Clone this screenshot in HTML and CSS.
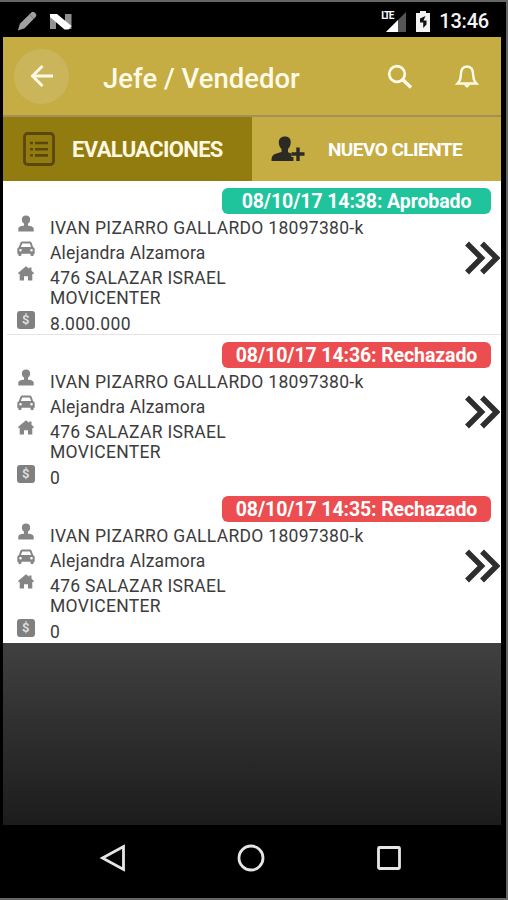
FILE: index.html
```html
<!DOCTYPE html>
<html lang="es">
<head>
    <meta charset="UTF-8">
    <meta name="viewport" content="width=device-width, initial-scale=1.0">
    <title>Jefe / Vendedor</title>
    <link rel="stylesheet" href="styles.css">
</head>
<body>
    <!-- iconos compartidos -->
    <svg class="sprite">
        <symbol id="user" viewBox="0 0 18 18">
            <path d="M9 .5c2.900 0 4.300 1.800 4.100 4.400-.1 1.700-1 2.900-2.100 3.700v2.200c3 .2 5.700.7 5.700 3.200v2.600H1.300V14c0-2.500 2.700-3 5.700-3.200V8.600C5.900 7.800 5 6.600 4.900 4.900 4.700 2.300 6.100.5 9 .5z"/>
        </symbol>
        <symbol id="car" viewBox="0 0 18 16">
            <path fill-rule="evenodd" d="M5.500.5h7c1.100 0 1.800.5 2.200 1.500l1.500 4.200c1 .4 1.500 1.100 1.500 2.200v4.400h-1v1.200c0 1.500-3.200 1.500-3.200 0v-1.200h-9v1.200c0 1.500-3.200 1.500-3.200 0v-1.200h-1V8.400c0-1.100.5-1.800 1.500-2.200L3.300 2C3.700 1 4.400.5 5.500.5zM5.200 2.400L3.900 6h10.200l-1.300-3.600zM3.500 8a1.300 1.300 0 1 0 0 2.600 1.300 1.300 0 0 0 0-2.600zm11 0a1.300 1.300 0 1 0 0 2.600 1.300 1.300 0 0 0 0-2.600z"/>
        </symbol>
        <symbol id="home" viewBox="0 0 18 16">
            <path d="M9 .3l3.200 2.500V1.500h2.300v3.200L17 6.900l-.8 1.300-.9-.5v6.900H11v-4.400H7v4.400H2.700V7.700l-.9.5L1 6.900z"/>
        </symbol>
        <symbol id="next" viewBox="0 0 36 34">
            <path d="M3 2.500L17.500 17 3 31.500M18 2.500L32.500 17 18 31.500" fill="none" stroke="#2e2e2e" stroke-width="5.500"/>
        </symbol>
    </svg>

    <div class="screen">
        <div class="status">
            <svg class="pencil" viewBox="0 0 22 22"><path d="M1 21l2-7L14.500 2.500c1.500-1.500 2.500-1.800 4-.3l1 1c1.300 1.300 1 2.500-.3 4L8 18.500z" fill="#a0a0a0"/><path d="M13 4l5 5" stroke="#777" stroke-width="1"/></svg>
            <svg class="nougat" viewBox="0 0 22 17"><path d="M0 1h6v15H0zM15 1h6.500v15H15z" fill="#909090"/><path d="M0 1h7l14.500 12-3 3.500h-4L0 4z" fill="#fff"/></svg>
            <span class="space"></span>
            <div class="lte"><span>LTE</span>
                <svg class="signal" viewBox="0 0 20 20"><path d="M20 0v20H0z" fill="#555"/><path d="M12 8v12H0z" fill="#fff"/></svg>
            </div>
            <svg class="battery" viewBox="0 0 14 21"><path d="M4 0h6v2h4v19H0V2h4z" fill="#f2f2f2"/><path d="M9.500 5L4 7.500v4h3.200V17L10.500 13.500V9.500H7.500z" fill="#111"/></svg>
            <span class="clock">13:46</span>
        </div>

        <div class="header">
            <div class="back">
                <svg width="24" height="24" viewBox="0 0 24 24"><path d="M23 12H2.500M12.500 2L2.500 12l10 10" fill="none" stroke="#fffbe8" stroke-width="2.900"/></svg>
            </div>
            <h1>Jefe / Vendedor</h1>
            <svg class="search" viewBox="0 0 26 26"><circle cx="10" cy="10" r="7.800" fill="none" stroke="#fffbe8" stroke-width="2.700"/><path d="M15.500 15.500l8.500 8" stroke="#fffbe8" stroke-width="3.500"/></svg>
            <svg class="bell" viewBox="0 0 24 24"><path d="M2.500 19.500c2-2 3.200-3.800 3.200-7.500 0-6 1.800-9.500 6.300-9.500s6.300 3.500 6.300 9.500c0 3.700 1.200 5.500 3.200 7.500z" fill="none" stroke="#fffbe8" stroke-width="2.400"/><path d="M8.500 20.500h7L12 24z" fill="#fffbe8"/></svg>
        </div>

        <div class="tabs">
            <div class="tab active">
                <svg class="list-icon" viewBox="0 0 32 34"><rect x="1.500" y="1.500" width="29" height="31" rx="3" fill="none" stroke="#5c4610" stroke-width="2.800"/><path d="M12 11h13M12 17.200h13M12 23.400h13" stroke="#5c4610" stroke-width="2.600"/><path d="M7 11h3M7 17.200h3M7 23.400h3" stroke="#5c4610" stroke-width="2.400"/></svg>
                <span>EVALUACIONES</span>
            </div>
            <div class="tab new">
                <svg class="add-icon" viewBox="0 0 34 26"><path d="M14 .5c4 0 6 2.500 5.700 6.200-.2 3-1.200 4.800-2.700 6.200v3.300l4 1.600v3h1.500V25H.5c0-7 2.500-6.500 10-9v-3.100C9 11.500 8 9.700 7.800 6.700 7.600 3 10 .5 14 .5z" fill="#2c2a24"/><path d="M27 11.500v13M20.500 18h13" stroke="#c5ac43" stroke-width="6"/><path d="M27 11.500v13.500M20.500 18h13" stroke="#2c2a24" stroke-width="3.400"/></svg>
                <span>NUEVO CLIENTE</span>
            </div>
        </div>

        <div class="list">
            <div class="item">
                <div class="badge ok">08/10/17 14:38: Aprobado</div>
                <div class="row"><svg class="icon user"><use href="#user"/></svg><p class="name">IVAN PIZARRO GALLARDO 18097380-k</p></div>
                <div class="row"><svg class="icon car"><use href="#car"/></svg><p class="seller">Alejandra Alzamora</p></div>
                <div class="row"><svg class="icon home"><use href="#home"/></svg><p class="place">476 SALAZAR ISRAEL<br>MOVICENTER</p></div>
                <div class="row"><span class="icon money">$</span><p class="amount">8.000.000</p></div>
                <svg class="next"><use href="#next"/></svg>
            </div>
            <div class="item">
                <div class="badge no">08/10/17 14:36: Rechazado</div>
                <div class="row"><svg class="icon user"><use href="#user"/></svg><p class="name">IVAN PIZARRO GALLARDO 18097380-k</p></div>
                <div class="row"><svg class="icon car"><use href="#car"/></svg><p class="seller">Alejandra Alzamora</p></div>
                <div class="row"><svg class="icon home"><use href="#home"/></svg><p class="place">476 SALAZAR ISRAEL<br>MOVICENTER</p></div>
                <div class="row"><span class="icon money">$</span><p class="amount">0</p></div>
                <svg class="next"><use href="#next"/></svg>
            </div>
            <div class="item">
                <div class="badge no">08/10/17 14:35: Rechazado</div>
                <div class="row"><svg class="icon user"><use href="#user"/></svg><p class="name">IVAN PIZARRO GALLARDO 18097380-k</p></div>
                <div class="row"><svg class="icon car"><use href="#car"/></svg><p class="seller">Alejandra Alzamora</p></div>
                <div class="row"><svg class="icon home"><use href="#home"/></svg><p class="place">476 SALAZAR ISRAEL<br>MOVICENTER</p></div>
                <div class="row"><span class="icon money">$</span><p class="amount">0</p></div>
                <svg class="next"><use href="#next"/></svg>
            </div>
        </div>

        <div class="empty"></div>

        <div class="nav">
            <svg width="28" height="28" viewBox="0 0 28 28"><path d="M24.500 2.500v23L3.500 14z"/></svg>
            <svg width="28" height="28" viewBox="0 0 28 28"><circle cx="14" cy="14" r="12"/></svg>
            <svg width="28" height="28" viewBox="0 0 28 28"><rect x="3.500" y="3.500" width="21" height="21" rx="1"/></svg>
        </div>
    </div>
</body>
</html>
```
FILE: styles.css
```css
*{
    box-sizing: border-box;
}
body{
    margin: 0;
    height: 900px;
    overflow: hidden;
    background-color: #000;
    border: solid #666;
    border-width: 2px 2px 2px 0;
    font-family: Roboto, sans-serif;
}
h1, p{
    margin: 0;
}
svg{
    display: block;
    flex: none;
}
.sprite{
    position: absolute;
    width: 0;
    height: 0;
}
.screen{
    width: 498px;
    margin-left: 3px;
}

/* barra de estado */
.status{
    display: flex;
    align-items: center;
    height: 35px;
    padding: 3px 12px 0 14px;
}
.pencil{
    width: 21px;
    height: 22px;
}
.nougat{
    width: 22px;
    height: 17px;
    margin-left: 12px;
}
.space{
    flex: 1;
}
.lte{
    display: flex;
    align-items: flex-start;
    height: 21px;
}
.lte span{
    width: 5px;
    font-size: 10px;
    font-weight: bold;
    line-height: 10px;
    letter-spacing: -1.500px;
    color: #fff;
    white-space: nowrap;
    position: relative;
    z-index: 1;
}
.signal{
    width: 20px;
    height: 20px;
    margin-top: 1px;
}
.battery{
    width: 14px;
    height: 21px;
    margin: 0 9px 0 10px;
}
.clock{
    font-size: 20px;
    font-weight: 500;
    letter-spacing: -0.200px;
    color: #f4f4f4;
}

/* cabecera */
.header{
    display: flex;
    align-items: center;
    height: 80px;
    padding: 0 22px 0 11px;
    background-color: #c5ac43;
    border-bottom: 2px solid #a38f58;
}
.back{
    display: flex;
    align-items: center;
    justify-content: center;
    width: 55px;
    height: 55px;
    border-radius: 50%;
    background-color: #cbb55a;
}
.header h1{
    flex: 1;
    margin-left: 34px;
    padding-top: 5px;
    font-size: 27.500px;
    font-weight: 500;
    color: #fffbe8;
    white-space: nowrap;
}
.search{
    width: 26px;
    height: 26px;
    margin-top: 2px;
}
.bell{
    width: 24px;
    height: 24px;
    margin-left: 42px;
}

/* pestañas */
.tabs{
    display: flex;
    height: 64px;
}
.tab{
    display: flex;
    align-items: center;
    width: 249px;
    background-color: #c5ac43;
    color: #fff;
    font-weight: bold;
    white-space: nowrap;
}
.active{
    padding-left: 20px;
    background-color: #927b0f;
    color: #fff8e0;
    font-size: 22px;
    letter-spacing: -0.650px;
}
.list-icon{
    width: 32px;
    height: 34px;
    margin-right: 17px;
}
.new{
    padding-left: 19px;
    font-size: 19px;
    letter-spacing: -0.550px;
}
.add-icon{
    width: 34px;
    height: 26px;
    margin-right: 23px;
}

/* evaluaciones */
.list{
    background-color: #fff;
}
.item{
    position: relative;
    height: 154px;
    padding: 7px 10px 0 14px;
}
.item:first-child{
    background: linear-gradient(#e4e4e4, #e4e4e4) 4px 100% / 100% 1px no-repeat;
}
.badge{
    width: 269px;
    height: 26px;
    margin: 0 0 3.500px auto;
    border-radius: 6px;
    font-size: 19.500px;
    font-weight: bold;
    line-height: 28px;
    letter-spacing: -0.100px;
    text-align: center;
    color: #fff;
    white-space: nowrap;
}
.ok{
    background-color: #1fc39c;
}
.no{
    background-color: #ec4d50;
}
.row{
    display: flex;
    align-items: flex-start;
    margin-bottom: 4.500px;
    font-size: 17.500px;
    line-height: 20.500px;
    letter-spacing: 0.300px;
    color: #3c3c3c;
}
.row p{
    margin-left: 15px;
    white-space: nowrap;
}
.row .seller{
    letter-spacing: 0.200px;
}
.row .amount{
    padding-top: 1px;
}
.icon{
    width: 18px;
    height: 16px;
    fill: #858585;
}
.user{
    height: 18px;
    margin-top: -3px;
}
.car{
    margin-top: -2px;
}
.home{
    margin-top: -2px;
}
.money{
    height: 18px;
    margin-top: -2px;
    border-radius: 3px;
    background-color: #808080;
    color: #ddd;
    font-size: 13px;
    font-weight: bold;
    line-height: 18px;
    text-align: center;
}
.next{
    position: absolute;
    top: 60px;
    right: 1px;
    width: 36px;
    height: 34px;
}

.empty{
    height: 182px;
    background: linear-gradient(#404040, #1c1c1c);
}

/* navegacion */
.nav{
    display: flex;
    justify-content: space-between;
    padding: 19px 98px 0 96px;
}
.nav svg{
    fill: none;
    stroke: #e6e6e6;
    stroke-width: 2.800;
}
```
